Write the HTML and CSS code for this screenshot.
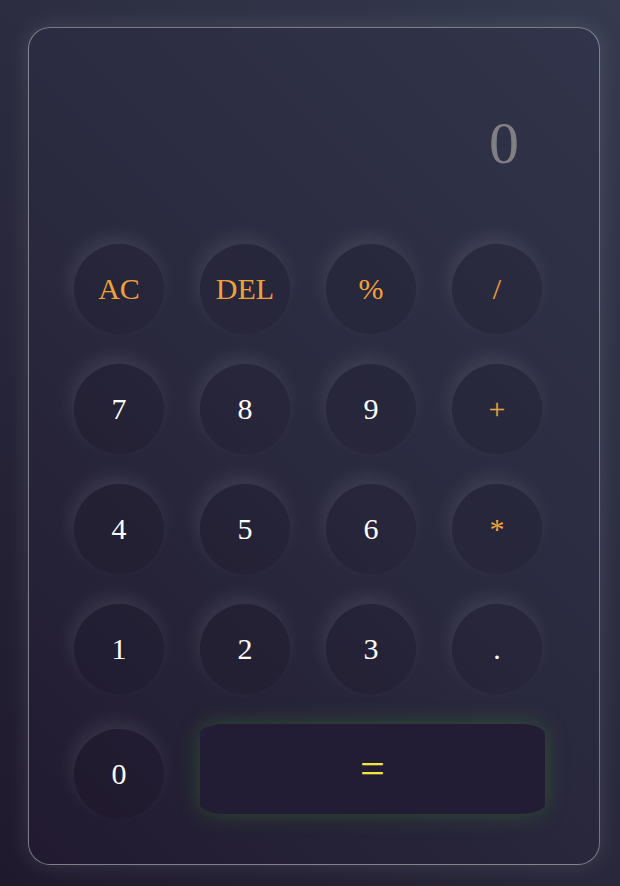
FILE: index.html
```html
<!DOCTYPE html>
<html>
<head>
<meta charset="utf-8">
<link rel="stylesheet" href="styles.css">
</head>
<body>
<div class="calc">
  <div class="display"><span class="value">0</span></div>
  <div class="keys">
    <button class="key op">AC</button>
    <button class="key op">DEL</button>
    <button class="key op">%</button>
    <button class="key op">/</button>
    <button class="key">7</button>
    <button class="key">8</button>
    <button class="key">9</button>
    <button class="key op">+</button>
    <button class="key">4</button>
    <button class="key">5</button>
    <button class="key">6</button>
    <button class="key op">*</button>
    <button class="key">1</button>
    <button class="key">2</button>
    <button class="key">3</button>
    <button class="key">.</button>
    <button class="key zero">0</button>
    <button class="equals">=</button>
  </div>
</div>
</body>
</html>
```

FILE: styles.css
```css
html, body {
  margin: 0;
  height: 100%;
}
body {
  padding: 27px 0 0 28px;
  box-sizing: border-box;
  background: linear-gradient(45deg, #1f192d 0%, #2a2a3e 50%, #353a4e 100%);
  font-family: "Liberation Serif", "Times New Roman", serif;
  overflow: hidden;
}
.calc {
  width: 572px;
  height: 838px;
  box-sizing: border-box;
  border: 1px solid rgba(255, 255, 255, 0.4);
  border-radius: 22px;
  padding: 0 57px 45px 45px;
  background: linear-gradient(45deg, #211a30 0%, #2a2a3f 50%, #31344a 100%);
  box-shadow: 0 0 22px rgba(255, 255, 255, 0.12);
}
.display {
  height: 216px;
  box-sizing: border-box;
  padding: 85px 23px 0 0;
  display: flex;
  justify-content: flex-end;
  align-items: flex-start;
}
.value {
  font-size: 60px;
  line-height: 60px;
  color: #7f7f84;
}
.keys {
  display: grid;
  grid-template-columns: repeat(4, 90px);
  grid-auto-rows: 90px;
  column-gap: 36px;
  row-gap: 30px;
}
.keys > :nth-last-child(-n+2) {
  grid-row: 5;
}
.key {
  width: 90px;
  height: 90px;
  border: none;
  border-radius: 50%;
  padding: 0;
  background: rgba(18, 14, 30, 0.14);
  color: #ffffff;
  font-family: "Liberation Serif", "Times New Roman", serif;
  font-size: 30px;
  line-height: 30px;
  box-shadow: -3px -8px 18px rgba(255, 255, 255, 0.09);
}
.op {
  color: #f0a23a;
}
.zero {
  margin-top: 5px;
}
.equals {
  grid-column: 2 / span 3;
  width: 345px;
  height: 90px;
  border: none;
  padding: 0;
  border-radius: 25px / 10px;
  background: #221d34;
  color: #f4e63a;
  font-family: "Liberation Serif", "Times New Roman", serif;
  font-size: 44px;
  line-height: 44px;
  box-shadow: 0 0 22px rgba(60, 130, 40, 0.45);
}
```
